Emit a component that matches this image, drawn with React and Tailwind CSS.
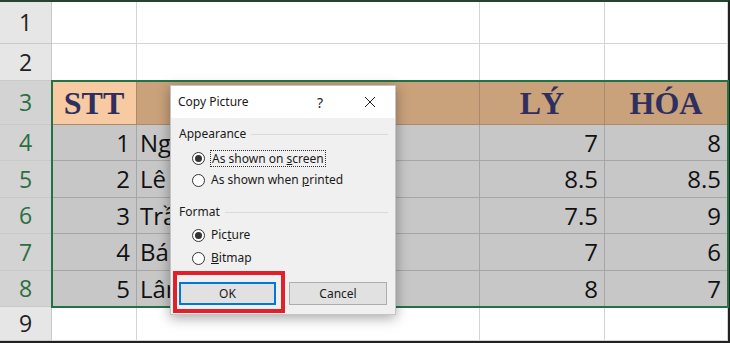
import React from 'react';

const rows = [
  { h: 'h-[42px]', n: '1' },
  { h: 'h-[37px]', n: '2' },
  { h: 'h-[44px]', n: '3', header: true },
  { h: 'h-[36px]', n: '4', data: ['1', 'Nguyễn Văn An', '7', '8'] },
  { h: 'h-[37px]', n: '5', data: ['2', 'Lê Thị Bình', '8.5', '8.5'] },
  { h: 'h-[36px]', n: '6', data: ['3', 'Trần Văn Cường', '7.5', '9'] },
  { h: 'h-[37px]', n: '7', data: ['4', 'Bá Thị Dung', '7', '6'] },
  { h: 'h-[36px]', n: '8', data: ['5', 'Lâm Văn Em', '8', '7'] },
  { h: 'h-[34px]', n: '9' },
];

const cols = ['w-[85px]', 'w-[343px]', 'w-[125px]', 'w-[123px]'];

function Radio({ checked }) {
  return (
    <span className="flex h-[13px] w-[13px] items-center justify-center rounded-full border border-[#333] bg-white">
      {checked && <span className="h-[7px] w-[7px] rounded-full bg-[#333]" />}
    </span>
  );
}

function Group({ label }) {
  return (
    <div className="flex h-[16px] items-center gap-[5px]">
      <span>{label}</span>
      <span className="h-px flex-1 bg-[#dadada]" />
    </div>
  );
}

function Row({ row }) {
  const selected = row.header || row.data;
  return (
    <div className={`flex ${row.h}`}>
      <div
        className={`flex w-[52px] shrink-0 items-center justify-center border-b border-r border-[#c9c9c9] text-[23px] ${
          selected ? 'bg-[#d3d3d3] text-[#2b6e3f]' : 'bg-[#e6e6e6] text-[#222]'
        }`}
      >
        {row.n}
      </div>
      {cols.map((w, i) => {
        if (row.header) {
          const labels = ['STT', 'HỌ VÀ TÊN', 'LÝ', 'HÓA'];
          return (
            <div
              key={i}
              className={`${w} flex shrink-0 items-center justify-center border-b border-r border-[#a98a6c] font-['Liberation_Serif',serif] text-[32px] font-bold text-[#2f2f5f] ${
                i === 0 ? 'bg-[#f8caa2]' : 'bg-[#c9a17b]'
              }`}
            >
              {labels[i]}
            </div>
          );
        }
        if (row.data) {
          return (
            <div
              key={i}
              className={`${w} flex shrink-0 items-center overflow-hidden whitespace-nowrap border-b border-r border-[#a6a6a6] bg-[#c7c7c7] text-[24px] text-[#111] ${
                i === 1 ? 'justify-start pl-[3px]' : 'justify-end pr-[6px]'
              }`}
            >
              {row.data[i]}
            </div>
          );
        }
        return <div key={i} className={`${w} shrink-0 border-b border-r border-[#d4d4d4] bg-white`} />;
      })}
    </div>
  );
}

export default function App() {
  return (
    <div className="relative h-[343px] w-[730px] overflow-hidden bg-white font-['Open_Sans',sans-serif]">
      <div className="flex flex-col border-b-2 border-r-2 border-t-2 border-b-[#222] border-r-[#222] border-t-[#24452d]">
        {rows.map((r) => (
          <Row key={r.n} row={r} />
        ))}
      </div>

      {/* selection outline */}
      <div className="pointer-events-none absolute left-[51px] top-[80px] h-[228px] w-[678px] border-2 border-[#217346]" />

      {/* dialog */}
      <div className="absolute left-[170px] top-[85px] flex h-[230px] w-[226px] flex-col border border-[#c4c4c4] bg-[#f0f0f0] font-['Noto_Sans',sans-serif] text-[12px] text-[#1a1a1a] shadow-[0_3px_12px_rgba(0,0,0,0.35)]">
        <div className="flex h-[32px] items-center bg-white pl-[7px]">
          <span className="flex-1">Copy Picture</span>
          <span className="mr-[41px] text-[14px]">?</span>
          <svg className="mr-[19px]" width="12" height="12" viewBox="0 0 12 12">
            <path d="M1 1L11 11M11 1L1 11" stroke="#222" strokeWidth="1" />
          </svg>
        </div>
        <div className="flex flex-col pl-[8px] pr-[7px]">
          <div className="mt-[8px]">
            <Group label="Appearance" />
          </div>
          <div className="mt-[6px] flex h-[20px] items-center gap-[5px] pl-[13px]">
            <Radio checked />
            <span className="border border-dotted border-[#333] px-px leading-[15px]">
              As shown on <span className="underline">s</span>creen
            </span>
          </div>
          <div className="mt-[2px] flex h-[20px] items-center gap-[6px] pl-[13px]">
            <Radio />
            <span>
              As shown when <span className="underline">p</span>rinted
            </span>
          </div>
          <div className="mt-[14px]">
            <Group label="Format" />
          </div>
          <div className="mt-[5px] flex h-[20px] items-center gap-[6px] pl-[13px]">
            <Radio checked />
            <span>
              Pic<span className="underline">t</span>ure
            </span>
          </div>
          <div className="mt-[3px] flex h-[20px] items-center gap-[6px] pl-[13px]">
            <Radio />
            <span>
              <span className="underline">B</span>itmap
            </span>
          </div>
          <div className="mt-[14px] flex gap-[13px]">
            <button className="h-[23px] w-[97px] border-2 border-[#0078d7] bg-[#e1e1e1] text-[12px]">OK</button>
            <button className="h-[23px] w-[98px] border border-[#adadad] bg-[#e1e1e1] text-[12px]">Cancel</button>
          </div>
        </div>
      </div>

      {/* red highlight */}
      <div className="pointer-events-none absolute left-[173px] top-[271px] h-[42px] w-[112px] border-4 border-[#e3202a]" />
    </div>
  );
}
